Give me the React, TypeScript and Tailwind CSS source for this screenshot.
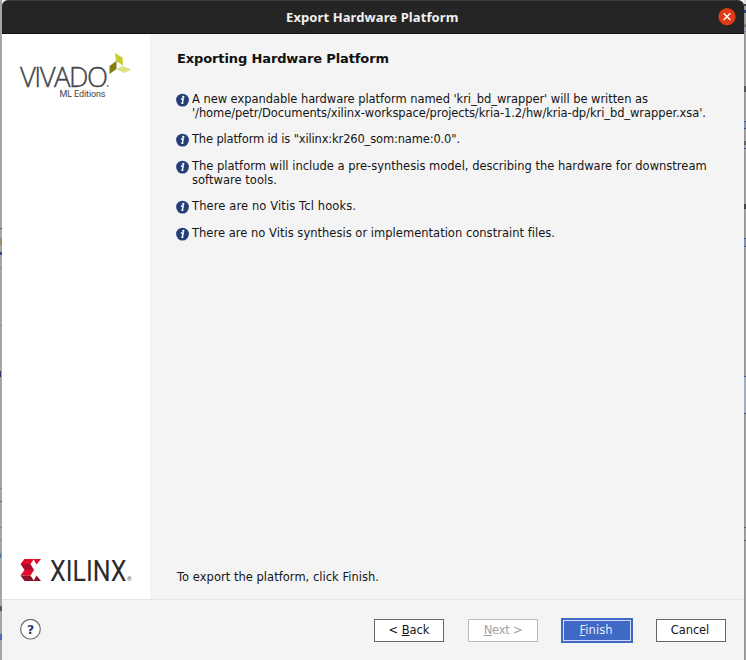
import React from 'react';

function InfoIcon() {
  return (
    <svg width="13" height="14" viewBox="0 0 13 14" className="mt-px shrink-0">
      <circle cx="6.5" cy="7.1" r="6.4" fill="#263e78" />
      <circle cx="7.3" cy="3.9" r="1.15" fill="#fff" />
      <path d="M4.9 6.1H7.2L6.2 10.3H7.4" fill="none" stroke="#fff" strokeWidth="1.5" />
    </svg>
  );
}

function Vivado() {
  return (
    <svg width="120" height="54" viewBox="16 50 120 54" className="block">
      <text x="20" y="86.5" fontSize="27.5" fontWeight="300" fill="#41464b" stroke="#41464b" strokeWidth="0.35" textLength="88" className="font-['Open_Sans',sans-serif]">VIVADO</text>
      <circle cx="107.7" cy="86" r="0.9" fill="#777" />
      <text x="59.5" y="97" fontSize="9" fill="#444" textLength="46" className="font-['Roboto',sans-serif]">ML Editions</text>
      <path d="M115 53L122.5 57.5L123 65.5L116 61Z" fill="#c5cd35" />
      <path d="M109.5 66L116.5 60.8V69L109.5 74Z" fill="#83800f" />
      <path d="M116.3 69.3L122.5 66L131 69.2L124.5 73Z" fill="#dce081" />
    </svg>
  );
}

function Xilinx() {
  return (
    <svg width="120" height="42" viewBox="16 548 120 42" className="block">
      <path d="M24.5 559H34L30.5 564H20.5Z" fill="#e5092b" />
      <path d="M20.5 564H30.5L34 570H24.5Z" fill="#b00b29" />
      <path d="M24.5 570H34L30.5 575.5H20.5Z" fill="#e5092b" />
      <path d="M20.5 575.5H30.5L34 581H24.5Z" fill="#8c1027" />
      <path d="M33.5 559H41L36.5 564.5Z" fill="#e5092b" />
      <path d="M33.5 581H41L36.5 575.5Z" fill="#8c1027" />
      <text x="50" y="580.5" fontSize="29" fill="#2b2b2d" textLength="76.5" lengthAdjust="spacingAndGlyphs" className="font-['Roboto',sans-serif]">XILINX</text>
      <text x="127" y="580.7" fontSize="6" fill="#555" className="font-['Roboto',sans-serif]">®</text>
    </svg>
  );
}

const items = [
  {
    height: 'h-[40px]',
    lines: [
      { text: "A new expandable hardware platform named 'kri_bd_wrapper' will be written as", track: 'tracking-[-0.055px]' },
      { text: "'/home/petr/Documents/xilinx-workspace/projects/kria-1.2/hw/kria-dp/kri_bd_wrapper.xsa'.", track: 'tracking-[-0.076px]' },
    ],
  },
  { height: 'h-[27px]', lines: [{ text: 'The platform id is "xilinx:kr260_som:name:0.0".', track: 'tracking-[-0.154px]' }] },
  {
    height: 'h-[40px]',
    lines: [
      { text: 'The platform will include a pre-synthesis model, describing the hardware for downstream', track: 'tracking-normal' },
      { text: 'software tools.', track: 'tracking-[0.03px]' },
    ],
  },
  { height: 'h-[27px]', lines: [{ text: 'There are no Vitis Tcl hooks.', track: 'tracking-[0.11px]' }] },
  { height: 'h-[27px]', lines: [{ text: 'There are no Vitis synthesis or implementation constraint files.', track: 'tracking-[0.02px]' }] },
];

export default function App() {
  return (
    <div className="flex h-[660px] w-[746px] overflow-hidden bg-[#aaa] font-['DejaVu_Sans',sans-serif] text-[11.5px] text-[#151515]">
      <div className="flex w-[2px] shrink-0 flex-col bg-[#a5a5a5]">
        <i className="mt-[228px] h-px bg-[#555]" />
        <i className="mt-[9px] h-[7px] bg-[#a08b6c]" />
        <i className="mt-[7px] h-[3px] bg-[#2c4ba0]" />
        <i className="mt-[12px] h-px bg-[#888]" />
        <i className="mt-[57px] h-px bg-[#888]" />
        <i className="mt-[45px] h-[6px] w-px bg-[#403070]" />
        <i className="mt-[111px] h-px bg-[#888]" />
        <i className="mt-[12px] h-px bg-[#666]" />
        <i className="mt-[25px] h-px bg-[#888]" />
        <i className="mt-[12px] h-px bg-[#888]" />
        <i className="mt-[12px] h-[5px] w-px bg-[#5170a0]" />
        <i className="mt-[48px] h-[5px] bg-[#555]" />
        <i className="mt-[23px] h-[6px] bg-[#5269b5]" />
      </div>
      <div className="flex w-[742px] shrink-0 flex-col bg-[#f4f4f4]">
        <div className="flex h-[34px] shrink-0 items-center rounded-t-[6px] border-b border-t border-b-[#111] border-t-[#3b3b3b] bg-[#252525]">
          <div className="ml-[284px] w-[174px] whitespace-nowrap font-['Noto_Sans',sans-serif] text-[13px] font-bold leading-[18px] tracking-[0.1px] text-[#f1f1ef]">Export Hardware Platform</div>
          <svg width="18" height="18" viewBox="0 0 18 18" className="ml-[258px]">
            <circle cx="9" cy="8.6" r="8.6" fill="#df3b16" />
            <path d="M5.7 5.3L12.3 11.9M12.3 5.3L5.7 11.9" stroke="#fff" strokeWidth="1.4" />
          </svg>
        </div>
        <div className="flex h-[565px] shrink-0">
          <div className="flex w-[148px] shrink-0 flex-col justify-between bg-white pb-[9px] pl-[14px] pt-[16px]">
            <Vivado />
            <Xilinx />
          </div>
          <div className="flex flex-1 flex-col pt-[16px]">
            <h1 className="ml-[27px] whitespace-nowrap text-[13px] font-bold leading-[18px] tracking-[-0.12px] text-[#111]">Exporting Hardware Platform</h1>
            <div className="ml-[26px] mt-[24px]">
              {items.map((item, i) => (
                <div key={i} className={`flex items-start ${item.height}`}>
                  <InfoIcon />
                  <div className="ml-[3px]">
                    {item.lines.map((line, j) => (
                      <p key={j} className={`whitespace-nowrap leading-[14px] ${line.track}`}>{line.text}</p>
                    ))}
                  </div>
                </div>
              ))}
            </div>
            <p className="mb-[15px] ml-[27px] mt-auto whitespace-nowrap leading-[14px] tracking-[0.025px]">To export the platform, click Finish.</p>
          </div>
        </div>
        <div className="flex flex-1 items-start border-t border-[#e5e5e5] pl-[18px] pt-[19px]">
          <svg width="21" height="21" viewBox="0 0 21 21">
            <circle cx="10.5" cy="10.2" r="9.8" fill="#fff" stroke="#6c6c6c" strokeWidth="1.2" />
            <text x="10.5" y="14.7" textAnchor="middle" fontSize="13" fontWeight="700" fill="#294276">?</text>
          </svg>
          <button className="ml-[333px] h-[23px] w-[70px] border border-[#666] bg-white leading-[21px] tracking-[-0.04px]">&lt; <u>B</u>ack</button>
          <button className="ml-[24px] h-[23px] w-[70px] border border-[#bbb] bg-white leading-[21px] tracking-[-0.25px] text-[#a3a3a3]"><u>N</u>ext &gt;</button>
          <div className="-mt-px ml-[23px] h-[25px] w-[72px] bg-[#4068c5] p-[2px]">
            <button className="block h-[21px] w-[68px] border border-[#d0daf2] pr-[2px] leading-[19px] tracking-[0.05px] text-[#e6ecfa]"><u>F</u>inish</button>
          </div>
          <button className="ml-[23px] h-[23px] w-[70px] border border-[#666] bg-white pr-[2px] leading-[21px] tracking-[-0.1px]">Cancel</button>
        </div>
      </div>
      <div className="flex w-[2px] shrink-0 flex-col bg-gradient-to-r from-[#888] to-[#b5b5b5]">
        <i className="h-[4px] bg-[#ddd]" />
        <i className="h-[2px] bg-[#444]" />
        <i className="mt-[4px] h-[3px] bg-[#284187]" />
        <i className="mt-[11px] h-[3px] bg-[#777]" />
        <i className="mt-[4px] h-px bg-[#7780a0]" />
        <i className="mt-[54px] h-[6px] bg-[#555]" />
        <i className="mt-[29px] h-[8px] border-y border-[#405890] bg-[#8791ad]" />
        <i className="mt-[12px] h-[4px] bg-[#666]" />
        <i className="mt-[3px] h-px bg-[#405890]" />
        <i className="mt-[55px] h-[5px] bg-[#444]" />
        <i className="mt-[29px] h-[9px] border-y border-[#405890] bg-[#8791ad]" />
        <i className="mt-[129px] h-[38px] border-y border-[#405890] bg-[#a4adbd]" />
        <i className="mt-[113px] h-px bg-[#666]" />
        <i className="mt-[12px] h-px bg-[#666]" />
      </div>
    </div>
  );
}
